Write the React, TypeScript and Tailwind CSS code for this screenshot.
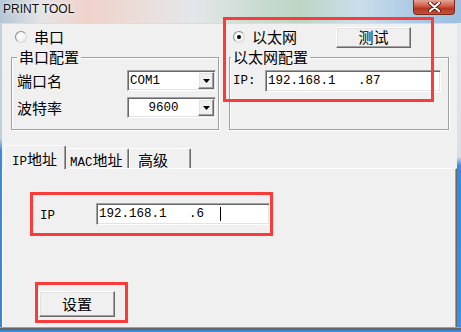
import React from 'react'

// half-width latin text, SimSun-like metrics (7.5px per char)
const M = ({ children }: { children: React.ReactNode }) => (
  <span className="font-['Liberation_Mono',monospace] text-[12.5px]">{children}</span>
)

const Radio = ({ checked }: { checked?: boolean }) => (
  <span className="w-[12px] h-[12px] shrink-0 rounded-full border border-t-[#8d8d8d] border-l-[#8d8d8d] border-r-[#d8d8d8] border-b-[#d8d8d8] bg-[radial-gradient(circle_at_40%_40%,#ffffff,#e6e6e6)] flex items-center justify-center">
    {checked && <span className="w-[4px] h-[4px] rounded-full bg-black" />}
  </span>
)

const sunken =
  'border border-t-[#a0a0a0] border-l-[#a0a0a0] border-r-white border-b-white shadow-[inset_1px_1px_0_#696969,inset_-1px_-1px_0_#e3e3e3] bg-white'
const raised =
  'border border-t-white border-l-white border-r-[#696969] border-b-[#696969] shadow-[inset_-1px_-1px_0_#a0a0a0,inset_1px_1px_0_#e3e3e3] bg-[#f0f0f0]'

const Combo = ({ value, center }: { value: string; center?: boolean }) => (
  <div className={`w-[89px] h-[21px] flex p-[1px] ${sunken}`}>
    <div className={`flex-1 flex items-center ${center ? 'justify-center' : 'pl-[1px]'}`}>
      <M>{value}</M>
    </div>
    <div className={`w-[16px] h-full flex items-center justify-center ${raised}`}>
      <svg width="7" height="4" viewBox="0 0 7 4">
        <path d="M0 0h7L3.5 4z" fill="#000" />
      </svg>
    </div>
  </div>
)

export default function App() {
  return (
    <div className="w-[461px] h-[332px] relative overflow-hidden flex flex-col bg-[#f0f0f0] text-black font-['Noto_Sans_CJK_SC',sans-serif] text-[15px] leading-[16px]">
      {/* title bar */}
      <div className="h-[23px] shrink-0 flex items-start justify-between bg-[linear-gradient(90deg,#b4c6d6_0%,#e6e4e6_9%,#f0d2ca_19%,#ecdcd8_29%,#e4e7ea_42%,#cbdcd2_55%,#bcd5c5_65%,#cadeea_78%,#abc9e4_90%,#9cc0e0_100%)]">
        <span className="ml-[3px] mt-[2px] font-['Liberation_Sans',sans-serif] text-[12px] leading-[14px] text-[#101010] [text-shadow:0_0_4px_#ffffff]">
          PRINT TOOL
        </span>
        <div className="mr-[6px] w-[42px] h-[15px] rounded-b-[4px] border border-t-0 border-[#7a2a1c] bg-[linear-gradient(180deg,#e3a597_0%,#cf5a43_45%,#b3371f_60%,#c4503a_100%)] flex items-center justify-center">
          <svg width="13" height="10" viewBox="0 0 13 10">
            <path d="M2 1l9 8M11 1l-9 8" stroke="#5a1a10" strokeWidth="4" strokeLinecap="round" />
            <path d="M2 1l9 8M11 1l-9 8" stroke="#fff" strokeWidth="2.2" strokeLinecap="round" />
          </svg>
        </div>
      </div>

      <div className="flex flex-1 min-h-0">
        <div className="w-[2px] bg-[linear-gradient(180deg,#c4d2de_0%,#bfcfdc_38%,#3d8ad6_42%,#3a86d4_100%)]" />

        <div className="w-[455px] flex flex-col border-t border-[#dcdcdc]">
          {/* top section */}
          <div className="h-[121px] flex pl-[9px] gap-[10px]">
            {/* serial */}
            <div className="w-[208px] flex flex-col">
              <div className="mt-[2px] h-[22px] flex items-center">
                <span className="ml-[4px]"><Radio /></span>
                <span className="ml-[7px]">串口</span>
              </div>
              <fieldset className="mt-[1px] h-[81px] border border-[#a0a0a0] shadow-[inset_1px_1px_0_#fff,1px_1px_0_#fff]">
                <legend className="ml-[5px] px-[2px]">串口配置</legend>
                <div className="flex flex-col gap-[6px] pt-[5px] pl-[5px] pr-[2px]">
                  <div className="flex items-center justify-between">
                    <span>端口名</span>
                    <Combo value="COM1" />
                  </div>
                  <div className="flex items-center justify-between">
                    <span>波特率</span>
                    <Combo value="9600" center />
                  </div>
                </div>
              </fieldset>
            </div>

            {/* ethernet */}
            <div className="w-[220px] flex flex-col">
              <div className="mt-[2px] h-[22px] flex items-center">
                <span className="ml-[4px]"><Radio checked /></span>
                <span className="ml-[7px]">以太网</span>
                <button className={`ml-auto mr-[38px] w-[75px] h-[21px] flex items-center justify-center ${raised}`}>
                  测试
                </button>
              </div>
              <fieldset className="mt-[1px] h-[81px] border border-[#a0a0a0] shadow-[inset_1px_1px_0_#fff,1px_1px_0_#fff]">
                <legend className="ml-[1px] px-[2px]">以太网配置</legend>
                <div className="flex items-center justify-between pt-[5px] pl-[3px] pr-[7px]">
                  <M>IP:</M>
                  <div className={`w-[176px] h-[22px] flex items-center pl-[2px] ${sunken}`}>
                    <M>192.168.1&nbsp;&nbsp;&nbsp;.87</M>
                  </div>
                </div>
              </fieldset>
            </div>
          </div>

          {/* tab control */}
          <div className="h-[23px] flex items-end pl-[2px]">
            <div className="relative z-10 -mb-px w-[62px] h-[24px] pt-[5px] pl-[7px] rounded-t-[2px] bg-[#f0f0f0] border-t border-l border-r border-t-white border-l-white border-r-[#696969] shadow-[inset_-1px_0_0_#a0a0a0]">
              <M>IP</M>地址
            </div>
            <div className="w-[63px] h-[20px] pt-[3px] pl-[4px] rounded-t-[2px] border-t border-r border-t-white border-r-[#696969] shadow-[inset_-1px_0_0_#a0a0a0]">
              <M>MAC</M>地址
            </div>
            <div className="w-[62px] h-[20px] pt-[3px] pl-[8px] rounded-t-[2px] border-t border-l border-r border-t-white border-l-white border-r-[#696969] shadow-[inset_-1px_0_0_#a0a0a0]">
              高级
            </div>
          </div>
          <div className="flex-1 flex flex-col border-t border-l border-r border-t-white border-l-white border-r-[#696969] shadow-[inset_-1px_0_0_#a0a0a0]">
            <div className="ml-[27px] mt-[23px] w-[243px] h-[44px] border-[3px] border-[#fb3a3a] flex items-center pl-[7px]">
              <span className="w-[56px]"><M>IP</M></span>
              <div className={`flex-1 h-[22px] flex items-center pl-[2px] ${sunken}`}>
                <M>192.168.1&nbsp;&nbsp;&nbsp;.6&nbsp;&nbsp;</M>
                <span className="ml-[1px] w-[1px] h-[14px] bg-black" />
              </div>
            </div>
            <div className="ml-[32px] mt-[46px] w-[93px] h-[41px] border-[3px] border-[#fb3a3a] pl-[1px] pt-[6px]">
              <button className={`w-[76px] h-[26px] flex items-center justify-center ${raised}`}>设置</button>
            </div>
          </div>
        </div>

        <div className="w-[4px] bg-[linear-gradient(180deg,#e4e9ee_0%,#d9e0e6_44%,#3a88d8_47%,#3f8fe0_100%)]" />
      </div>

      <div className="h-[5px] shrink-0 flex flex-col">
        <div className="h-[1px] bg-[#a0a0a0]" />
        <div className="h-[2px] bg-[#666666]" />
        <div className="flex-1 bg-[#3a88d8]" />
      </div>

      {/* annotation box around ethernet settings */}
      <div className="absolute left-[223px] top-[17px] w-[211px] h-[85px] border-[3px] border-[#fb3a3a] pointer-events-none" />
    </div>
  )
}
